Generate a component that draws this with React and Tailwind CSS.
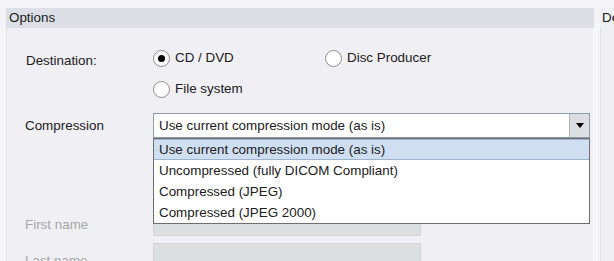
import React from "react";

function Radio({ checked }) {
  return (
    <span className="w-[17px] h-[17px] rounded-full border border-[#8c8c8c] bg-white flex items-center justify-center shrink-0">
      {checked && <span className="w-[7px] h-[7px] rounded-full bg-black" />}
    </span>
  );
}

export default function App() {
  const items = [
    "Use current compression mode (as is)",
    "Uncompressed (fully DICOM Compliant)",
    "Compressed (JPEG)",
    "Compressed (JPEG 2000)",
  ];
  return (
    <div
      className="w-[614px] h-[261px] overflow-hidden bg-[#f5f5f7] flex text-[13.4px] text-[#202020]"
      style={{ fontFamily: '"Liberation Sans", Arial, sans-serif' }}
    >
      <div className="w-[6px] shrink-0" />
      <div className="w-[588px] shrink-0 flex flex-col pt-[8px]">
        <div className="h-[20px] bg-[#dcdfe6] pl-[3px] flex items-center text-[#1a1a1a]">Options</div>
        <div className="flex-1 bg-[#efeff4] border-l border-[#e2e2e8] border-r border-r-[#f8f8fa] relative">
          <div className="flex flex-col pl-[18px] pt-[20px]">
            <div className="flex">
              <div className="w-[128px] pt-[3px] pl-[1px]">Destination:</div>
              <div className="flex flex-col gap-[11px]">
                <div className="flex">
                  <div className="w-[172px] flex items-center gap-[5px]">
                    <Radio checked />
                    <span>CD / DVD</span>
                  </div>
                  <div className="flex items-center gap-[5px]">
                    <Radio />
                    <span>Disc Producer</span>
                  </div>
                </div>
                <div className="flex items-center gap-[5px]">
                  <Radio />
                  <span>File system</span>
                </div>
              </div>
            </div>
            <div className="flex mt-[14px] relative">
              <div className="w-[128px] pt-[3px]">Compression</div>
              <div className="relative">
                <div className="w-[437px] h-[25px] border border-[#8e9aa6] bg-white flex">
                  <div className="flex-1 pl-[5px] flex items-center">{items[0]}</div>
                  <div className="w-[20px] bg-[#dcdee2] border-l border-[#b4b8be] flex items-center justify-center">
                    <svg width="8" height="5" viewBox="0 0 8 5">
                      <path d="M0 0 L8 0 L4 5 Z" fill="#000" />
                    </svg>
                  </div>
                </div>
                <div className="absolute left-0 top-[25px] w-[437px] z-10 bg-white border border-[#6e6e6e] flex flex-col">
                  {items.map((t, i) => (
                    <div
                      key={t}
                      className={
                        "h-[21px] pl-[5px] flex items-center " +
                        (i === 0 ? "bg-[#cfdff1] border-y border-[#9fb4cc]" : "")
                      }
                    >
                      {t}
                    </div>
                  ))}
                </div>
              </div>
            </div>
            <div className="flex mt-[76px] items-center">
              <div className="w-[128px] text-[#a8a8a8]">First name</div>
              <div className="w-[268px] h-[26px] bg-[#dedfe1] border border-[#d4d5d8] mt-[-4px]" />
            </div>
            <div className="flex mt-[7px]">
              <div className="w-[128px] pt-[8px] text-[#a8a8a8]">Last name</div>
              <div className="w-[268px] h-[26px] bg-[#dedfe1] border border-[#d4d5d8]" />
            </div>
          </div>
        </div>
      </div>
      <div className="w-[6px] shrink-0" />
      <div className="flex-1 flex flex-col pt-[8px]">
        <div className="h-[20px] bg-[#eef0f3] pl-[2px] flex items-center whitespace-nowrap overflow-hidden">Destination</div>
        <div className="flex-1 bg-[#efeff4] border-l border-[#e2e2e8]" />
      </div>
    </div>
  );
}
